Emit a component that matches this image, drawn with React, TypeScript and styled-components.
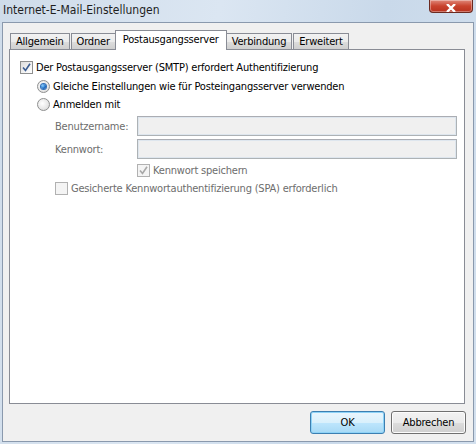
import React from "react";
import styled, { createGlobalStyle } from "styled-components";

const GlobalStyle = createGlobalStyle`
  html, body { margin: 0; padding: 0; }
  body {
    font-family: "DejaVu Sans Condensed", "DejaVu Sans", sans-serif;
    font-size: 11px;
    letter-spacing: -0.2px;
  }
`;

const Window = styled.div`
  width: 476px;
  height: 444px;
  box-sizing: border-box;
  display: flex;
  flex-direction: column;
  background: linear-gradient(100deg, #cfdcea 0%, #dbe6f2 40%, #c9d9ea 70%, #d3e0ee 100%);
  padding: 0 2px 2px 2px;
`;

const TitleBar = styled.div`
  height: 22px;
  display: flex;
  justify-content: space-between;
  align-items: flex-start;
  flex-shrink: 0;
`;

const Title = styled.div`
  font-size: 12px;
  letter-spacing: 0;
  color: #1e1e1e;
  padding: 3px 0 0 1px;
  line-height: 14px;
`;

const CloseButton = styled.div`
  width: 42px;
  height: 12px;
  margin-right: 1px;
  border: 1px solid #6b2a20;
  border-top: none;
  border-radius: 0 0 4px 4px;
  background: linear-gradient(180deg, #e0897a 0%, #c9432e 50%, #b8321e 100%);
  display: flex;
  align-items: flex-end;
  justify-content: center;
  overflow: hidden;
  box-shadow: inset 0 0 0 1px rgba(255, 255, 255, 0.35);
`;

const Client = styled.div`
  flex: 1;
  background: #f0f0f0;
  border: 1px solid #8a99ad;
  display: flex;
  flex-direction: column;
  padding: 7px 7px 0 6px;
`;

const TabStrip = styled.div`
  display: flex;
  align-items: flex-end;
  height: 19px;
  padding-left: 1px;
  position: relative;
  z-index: 1;
`;

const Tab = styled.div<{ $active?: boolean }>`
  box-sizing: border-box;
  height: ${(p) => (p.$active ? "20px" : "16px")};
  margin-bottom: ${(p) => (p.$active ? "-1px" : "0")};
  margin-right: ${(p) => (p.$active ? "-1px" : "1px")};
  margin-left: ${(p) => (p.$active ? "-2px" : "0")};
  padding: ${(p) => (p.$active ? "0 7px 3px 7px" : "0 5px")};
  border: 1px solid #898c95;
  border-bottom: none;
  background: ${(p) =>
    p.$active ? "#ffffff" : "linear-gradient(180deg, #f2f2f2 0%, #ebebeb 50%, #dddddd 51%, #cfcfcf 100%)"};
  display: flex;
  align-items: center;
  color: #000;
  white-space: nowrap;
`;

const Panel = styled.div`
  height: 355px;
  background: #ffffff;
  border: 1px solid #898c95;
  box-sizing: border-box;
  margin-right: 1px;
  padding: 8px 0 0 10px;
  display: flex;
  flex-direction: column;
`;

const Row = styled.label<{ $indent?: number; $disabled?: boolean }>`
  display: flex;
  align-items: center;
  height: 18px;
  padding-left: ${(p) => p.$indent ?? 0}px;
  color: ${(p) => (p.$disabled ? "#6d6d6d" : "#000")};
  white-space: nowrap;
`;

const Gap = styled.div<{ $h: number }>`
  height: ${(p) => p.$h}px;
  flex-shrink: 0;
`;

const CheckBox = styled.span<{ $disabled?: boolean }>`
  width: 13px;
  height: 13px;
  box-sizing: border-box;
  border: 1px solid ${(p) => (p.$disabled ? "#b1b1b1" : "#8e8f8f")};
  background: ${(p) =>
    p.$disabled ? "#f4f4f4" : "linear-gradient(135deg, #dcdcdc 0%, #f6f6f6 70%, #ffffff 100%)"};
  margin-right: 3px;
  display: flex;
  align-items: center;
  justify-content: center;
  flex-shrink: 0;
`;

const Radio = styled.span<{ $checked?: boolean }>`
  width: 13px;
  height: 13px;
  box-sizing: border-box;
  border-radius: 50%;
  border: 1px solid #8e8f8f;
  background: radial-gradient(circle at 40% 40%, #ffffff 0%, #e6e6e6 60%, #cfcfcf 100%);
  margin-right: 3px;
  display: flex;
  align-items: center;
  justify-content: center;
  flex-shrink: 0;
  &::after {
    content: "";
    display: ${(p) => (p.$checked ? "block" : "none")};
    width: 5px;
    height: 5px;
    border-radius: 50%;
    background: radial-gradient(circle at 35% 35%, #8ad0ff 0%, #1f6fc6 55%, #0d3d85 100%);
    box-shadow: 0 0 0 1px #2f6fb8;
  }
`;

const FieldRow = styled.div`
  display: flex;
  align-items: center;
  height: 20px;
  padding-left: 35px;
`;

const FieldLabel = styled.span`
  width: 82px;
  color: #6d6d6d;
  flex-shrink: 0;
`;

const Input = styled.div`
  width: 320px;
  height: 20px;
  box-sizing: border-box;
  background: #f0f0f0;
  border: 1px solid #adb2b5;
  border-top-color: #abadb3;
  box-shadow: inset 0 0 0 1px #dee6ee;
`;

const ButtonRow = styled.div`
  display: flex;
  justify-content: flex-end;
  gap: 6px;
  padding: 7px 0 0 0;
`;

const Button = styled.div<{ $default?: boolean }>`
  width: 75px;
  height: 23px;
  box-sizing: border-box;
  border: 1px solid ${(p) => (p.$default ? "#3c7fb1" : "#707070")};
  border-radius: 3px;
  background: ${(p) =>
    p.$default
      ? "linear-gradient(180deg, #eaf6fd 0%, #d9f0fc 50%, #bee6fd 51%, #a7d9f5 100%)"
      : "linear-gradient(180deg, #f2f2f2 0%, #ebebeb 50%, #dddddd 51%, #cfcfcf 100%)"};
  box-shadow: ${(p) =>
    p.$default ? "inset 0 0 0 1px #8ed3f7" : "inset 0 0 0 1px #fcfcfc"};
  display: flex;
  align-items: center;
  justify-content: center;
  color: #000;
`;

const Check = ({ color }: { color: string }) => (
  <svg width="9" height="9" viewBox="0 0 9 9">
    <path d="M1 4.5 L3.5 7.5 L8 0.8" stroke={color} strokeWidth="1.6" fill="none" />
  </svg>
);

export default function App() {
  return (
    <>
      <GlobalStyle />
      <Window>
        <TitleBar>
          <Title>Internet-E-Mail-Einstellungen</Title>
          <CloseButton>
            <svg width="12" height="8" viewBox="0 0 12 8">
              <path d="M2 0 L10 8 M10 0 L2 8" stroke="#ffffff" strokeWidth="2.4" />
            </svg>
          </CloseButton>
        </TitleBar>
        <Client>
          <TabStrip>
            <Tab>Allgemein</Tab>
            <Tab>Ordner</Tab>
            <Tab $active>Postausgangsserver</Tab>
            <Tab>Verbindung</Tab>
            <Tab>Erweitert</Tab>
          </TabStrip>
          <Panel>
            <Row>
              <CheckBox>
                <Check color="#3b5d92" />
              </CheckBox>
              Der Postausgangsserver (SMTP) erfordert Authentifizierung
            </Row>
            <Gap $h={1} />
            <Row $indent={17}>
              <Radio $checked />
              Gleiche Einstellungen wie für Posteingangsserver verwenden
            </Row>
            <Row $indent={17}>
              <Radio />
              Anmelden mit
            </Row>
            <Gap $h={3} />
            <FieldRow>
              <FieldLabel>Benutzername:</FieldLabel>
              <Input />
            </FieldRow>
            <Gap $h={3} />
            <FieldRow>
              <FieldLabel>Kennwort:</FieldLabel>
              <Input />
            </FieldRow>
            <Gap $h={2} />
            <Row $indent={117} $disabled>
              <CheckBox $disabled>
                <Check color="#a8a8a8" />
              </CheckBox>
              Kennwort speichern
            </Row>
            <Row $indent={35} $disabled>
              <CheckBox $disabled />
              Gesicherte Kennwortauthentifizierung (SPA) erforderlich
            </Row>
          </Panel>
          <ButtonRow>
            <Button $default>OK</Button>
            <Button>Abbrechen</Button>
          </ButtonRow>
        </Client>
      </Window>
    </>
  );
}
